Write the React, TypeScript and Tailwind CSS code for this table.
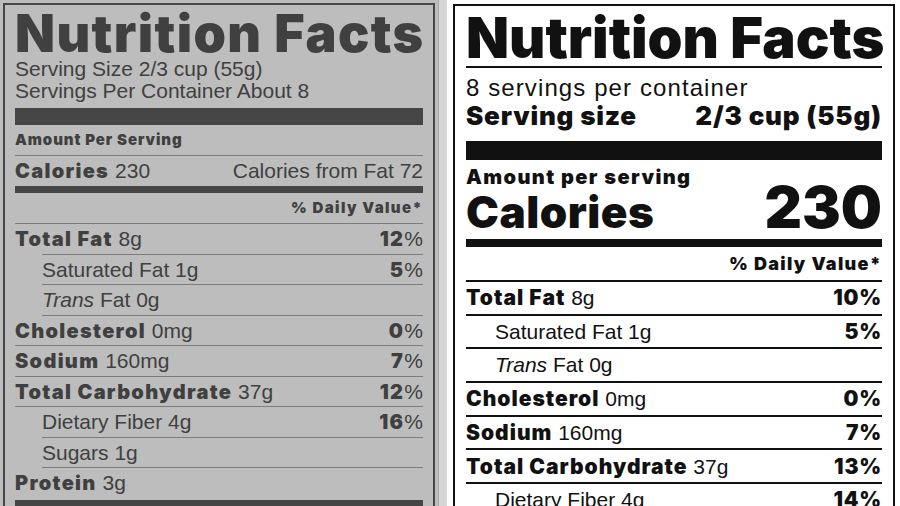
import React from "react";

type Row = {
  name: string;
  amount: string;
  dv?: string;
  sub?: boolean;
  italic?: boolean;
  rule: "full" | "indent";
};

const oldRows: Row[] = [
  { name: "Total Fat", amount: "8g", dv: "12", rule: "indent" },
  { name: "Saturated Fat", amount: "1g", dv: "5", sub: true, rule: "indent" },
  { name: "Fat", amount: "0g", sub: true, italic: true, rule: "indent" },
  { name: "Cholesterol", amount: "0mg", dv: "0", rule: "full" },
  { name: "Sodium", amount: "160mg", dv: "7", rule: "full" },
  { name: "Total Carbohydrate", amount: "37g", dv: "12", rule: "full" },
  { name: "Dietary Fiber", amount: "4g", dv: "16", sub: true, rule: "indent" },
  { name: "Sugars", amount: "1g", sub: true, rule: "indent" },
  { name: "Protein", amount: "3g", rule: "full" },
];

const newRows: Row[] = [
  { name: "Total Fat", amount: "8g", dv: "10", rule: "full" },
  { name: "Saturated Fat", amount: "1g", dv: "5", sub: true, rule: "full" },
  { name: "Fat", amount: "0g", sub: true, italic: true, rule: "full" },
  { name: "Cholesterol", amount: "0mg", dv: "0", rule: "full" },
  { name: "Sodium", amount: "160mg", dv: "7", rule: "full" },
  { name: "Total Carbohydrate", amount: "37g", dv: "13", rule: "full" },
  { name: "Dietary Fiber", amount: "4g", dv: "14", sub: true, rule: "full" },
];

const heavy = "font-['Inter',sans-serif] font-black";
const plain = "font-['Liberation_Sans',Arial,sans-serif] font-normal";

// old style label, grey print
const OldLabel = () => (
  <div className="w-[432px] h-[520px] border-2 border-[#474747] px-[10px] text-[#404040]">
    <div className={`${heavy} h-[53px] text-[52px] leading-[58px] tracking-[1.4px] whitespace-nowrap`}>Nutrition Facts</div>
    <div className={`${plain} text-[21px] leading-[22px]`}>
      <div>Serving Size 2/3 cup (55g)</div>
      <div>Servings Per Container About 8</div>
    </div>
    <div className="mt-[6px] h-[17px] bg-[#454545]" />
    <div className={`${heavy} h-[31px] flex items-center text-[15px] tracking-[0.9px] border-b border-[#7c7c7c]`}>Amount Per Serving</div>
    <div className={`${plain} h-[30px] flex items-center justify-between text-[21px]`}>
      <span>
        <span className={`${heavy} text-[20px] tracking-[1.3px]`}>Calories</span> 230
      </span>
      <span>Calories from Fat 72</span>
    </div>
    <div className="h-[7px] bg-[#454545]" />
    <div className={`${heavy} h-[31px] flex items-center justify-end text-[15px] tracking-[1.4px] border-b border-[#7c7c7c]`}>% Daily Value*</div>
    {oldRows.map((r) => (
      <div key={r.name}>
        <div className={`${plain} h-[29.5px] flex items-center justify-between text-[21px] ${r.sub ? "pl-[27px]" : ""}`}>
          <span>
            {r.italic && <i>Trans </i>}
            {r.sub ? r.name : <span className={`${heavy} text-[20px] tracking-[1.3px]`}>{r.name}</span>} {r.amount}
          </span>
          {r.dv && (
            <span>
              <span className={`${heavy} text-[20px] tracking-[1.3px]`}>{r.dv}</span>%
            </span>
          )}
        </div>
        {r.name !== "Protein" && (
          <div className={`h-px bg-[#7c7c7c] ${r.rule === "indent" ? "ml-[27px]" : ""}`} />
        )}
      </div>
    ))}
    <div className="mt-[2px] h-[17px] bg-[#454545]" />
  </div>
);

// new style label, black on white
const NewLabel = () => (
  <div className="w-[442px] h-[520px] border-2 border-[#111] px-[11px] text-[#111]">
    <div className={`${heavy} h-[62px] text-[56px] leading-[64px] whitespace-nowrap border-b-2 border-[#111]`}>Nutrition Facts</div>
    <div className={`${plain} mt-[7px] text-[24px] leading-[26px] tracking-[1.1px]`}>8 servings per container</div>
    <div className={`${heavy} flex justify-between text-[26px] leading-[30px] tracking-[0.8px]`}>
      <span>Serving size</span>
      <span>2/3 cup (55g)</span>
    </div>
    <div className="mt-[10px] h-[19px] bg-[#111]" />
    <div className={`${heavy} mt-[7px] text-[20px] leading-[20px] tracking-[1.4px]`}>Amount per serving</div>
    <div className={`${heavy} flex justify-between items-end h-[49px]`}>
      <span className="text-[44px] leading-[44px] pb-[2px] tracking-[0.5px]">Calories</span>
      <span className="text-[58px] leading-[54px] pb-[2px]">230</span>
    </div>
    <div className="mt-[3px] h-[8px] bg-[#111]" />
    <div className={`${heavy} h-[35px] flex items-center justify-end text-[18px] tracking-[1.3px] border-b-2 border-[#111]`}>% Daily Value*</div>
    {newRows.map((r) => (
      <div
        key={r.name}
        className={`${plain} h-[33.7px] flex items-center justify-between text-[21px] border-b-2 border-[#111] ${r.sub ? "pl-[29px]" : ""}`}
      >
        <span>
          {r.italic && <i>Trans </i>}
          {r.sub ? r.name : <span className={`${heavy} tracking-[1px]`}>{r.name}</span>} {r.amount}
        </span>
        {r.dv && <span className={`${heavy} tracking-[0.8px]`}>{r.dv}%</span>}
      </div>
    ))}
  </div>
);

export default function App() {
  return (
    <div className="w-[900px] h-[506px] flex overflow-hidden bg-white">
      <div className="w-[438px] h-full bg-[#bdbdbd] pt-[3px] pl-[3px]">
        <OldLabel />
      </div>
      <div className="w-px h-full bg-[#a9a9a9]" />
      <div className="w-[8px] h-full bg-[#d6d6d6]" />
      <div className="flex-1 h-full bg-white pt-[4px] pl-[6px]">
        <NewLabel />
      </div>
    </div>
  );
}
